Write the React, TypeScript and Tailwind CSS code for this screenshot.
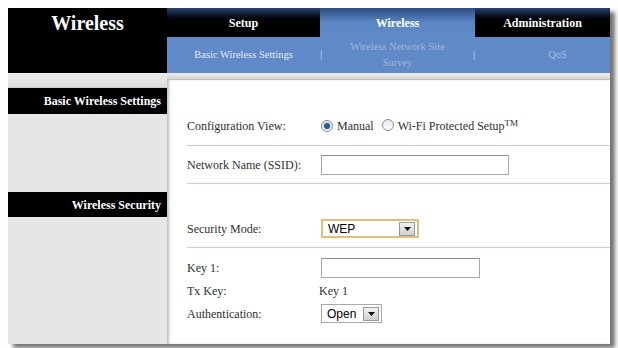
import React from 'react';

const serif = "font-['Liberation_Serif','Times_New_Roman',serif]";

const Radio: React.FC<{ checked?: boolean }> = ({ checked }) => (
  <span className="relative inline-flex h-[12px] w-[12px] items-center justify-center rounded-full border border-[#8a8a8a] bg-gradient-to-b from-[#e9e9e9] to-[#ffffff]">
    {checked && <span className="h-[6px] w-[6px] rounded-full bg-[#2a5a9a] shadow-[0_0_2px_#6aa0e0]"></span>}
  </span>
);

const SelectBox: React.FC<{ value: string; width: string; highlight?: boolean }> = ({ value, width, highlight }) => (
  <div
    className={`flex h-[19px] items-center justify-between bg-white pl-[5px] pr-[2px] font-['Liberation_Sans',Arial,sans-serif] text-[12px] text-black ${width} ${
      highlight ? 'border-2 border-[#dcc078]' : 'border border-[#a9a9a9]'
    }`}
  >
    <span>{value}</span>
    <span className="flex h-[14px] w-[16px] items-center justify-center border border-[#9a9a9a] bg-gradient-to-b from-[#f2f2f2] to-[#cfcfcf]">
      <svg width="7" height="4" viewBox="0 0 7 4">
        <path d="M0 0 L7 0 L3.5 4 Z" fill="#111" />
      </svg>
    </span>
  </div>
);

const FormRow: React.FC<{ label: string; children?: React.ReactNode; line?: boolean; h: string }> = ({ label, children, line, h }) => (
  <div className={`flex items-center ${h} ${line ? 'border-b border-[#c9cbd8]' : ''}`}>
    <div className="w-[134px] text-[12px] text-[#2f2f2f]">{label}</div>
    <div className="flex items-center">{children}</div>
  </div>
);

export default function App() {
  return (
    <div className={`h-[348px] w-[618px] overflow-hidden bg-white pl-[8px] pt-[8px] ${serif}`}>
      <div className="flex h-[336px] w-[602px] flex-col shadow-[5px_4px_4px_rgba(0,0,0,0.55)]">
        {/* header */}
        <div className="flex h-[65px]">
          <div className="flex w-[159px] justify-center bg-black pt-[3px]">
            <span className="text-[20px] font-bold leading-[24px] text-white">Wireless</span>
          </div>
          <div className="flex flex-1 flex-col">
            <div className="flex h-[29px] text-[12px] font-bold text-white">
              <div className="flex w-[153px] items-center justify-center bg-gradient-to-b from-[#2c4470] via-black to-black">Setup</div>
              <div className="flex w-[155px] items-center justify-center bg-gradient-to-b from-[#2e4c7e] via-[#5b86c4] to-[#5f8ac7]">Wireless</div>
              <div className="flex flex-1 items-center justify-center bg-gradient-to-b from-[#2c4470] via-black to-black">Administration</div>
            </div>
            <div className="flex h-[36px] items-center bg-[#5f8ac7] text-[10.5px]">
              <div className="flex w-[153px] justify-center text-[#e3e9f5]">Basic Wireless Settings</div>
              <div className="flex w-[155px] items-center">
                <span className="text-[#dbe3f2]">|</span>
                <span className="flex-1 text-center leading-[16px] text-[#9fb6dd]">
                  Wireless Network Site
                  <br />
                  Survey
                </span>
                <span className="text-[#dbe3f2]">|</span>
              </div>
              <div className="flex flex-1 justify-center pl-[30px] text-[#a9bde0]">QoS</div>
            </div>
          </div>
        </div>

        {/* body */}
        <div className="flex flex-1">
          <div className="flex w-[159px] flex-col bg-[#e6e6e6]">
            <div className="h-[15px] border-b border-[#cdcdcd] bg-gradient-to-b from-[#ececec] to-[#dedede]"></div>
            <div className="flex h-[26px] items-center justify-end bg-black pr-[6px] text-[12px] font-bold text-white">
              Basic Wireless Settings
            </div>
            <div className="h-[78px]"></div>
            <div className="flex h-[25px] items-center justify-end bg-black pr-[6px] text-[12px] font-bold text-white">
              Wireless Security
            </div>
          </div>

          <div className="flex flex-1 flex-col">
            <div className="h-[7px] border-b border-[#bdbdbd] bg-gradient-to-b from-[#ececec] to-[#d6d6d6]"></div>
            <div className="flex flex-1 flex-col bg-white pl-[20px] shadow-[inset_3px_0_3px_-1px_rgba(0,0,0,0.25)]">
              <div className="h-[27px]"></div>
              <FormRow label="Configuration View:" line h="h-[39px]">
                <Radio checked />
                <span className="ml-[4px] text-[12px] text-[#2f2f2f]">Manual</span>
                <span className="ml-[8px]">
                  <Radio />
                </span>
                <span className="ml-[4px] text-[12px] text-[#2f2f2f]">
                  Wi-Fi Protected Setup<sup className="text-[9px]">TM</sup>
                </span>
              </FormRow>
              <FormRow label="Network Name (SSID):" line h="h-[38px]">
                <div className="h-[20px] w-[188px] border border-[#a8a8a8] border-t-[#8e8e8e]"></div>
              </FormRow>
              <div className="h-[26px]"></div>
              <FormRow label="Security Mode:" line h="h-[38px]">
                <SelectBox value="WEP" width="w-[98px]" highlight />
              </FormRow>
              <div className="h-[8px]"></div>
              <FormRow label="Key 1:" h="h-[23px]">
                <div className="h-[20px] w-[159px] border border-[#a8a8a8] border-t-[#8e8e8e]"></div>
              </FormRow>
              <FormRow label="Tx Key:" h="h-[23px]">
                <span className="-ml-[2px] text-[12px] text-[#2f2f2f]">Key 1</span>
              </FormRow>
              <FormRow label="Authentication:" h="h-[23px]">
                <SelectBox value="Open" width="w-[61px]" />
              </FormRow>
            </div>
          </div>
        </div>
      </div>
    </div>
  );
}
